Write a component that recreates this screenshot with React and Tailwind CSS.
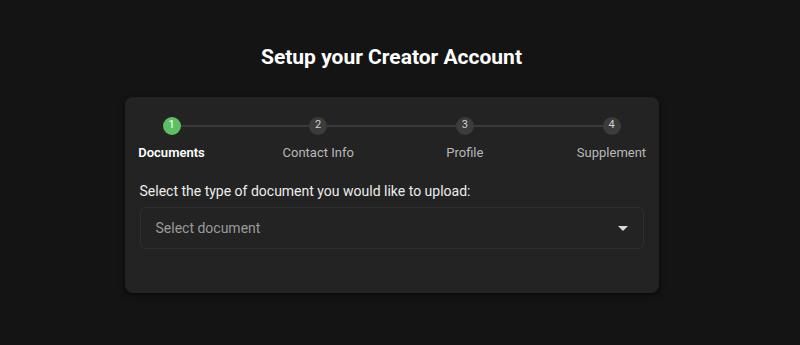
import React from 'react';

const steps = ['Documents', 'Contact Info', 'Profile', 'Supplement'];

const StepCircle = ({ n, active }) => (
  <div
    className={`flex h-[18px] w-[18px] shrink-0 items-center justify-center rounded-full text-[11px] ${
      active ? 'bg-[#5cbf62] text-white' : 'bg-[#3c3c3c] text-[#d0d0d0]'
    }`}
  >
    {n}
  </div>
);

const Stepper = ({ current }) => {
  return (
    <div>
      {/* circles + connectors */}
      <div className="flex items-center px-[23px]">
        {steps.map((s, i) => (
          <React.Fragment key={s}>
            <StepCircle n={i + 1} active={i === current} />
            {i < steps.length - 1 && <div className="h-[2px] flex-1 bg-[#3a3a3a]" />}
          </React.Fragment>
        ))}
      </div>
      {/* labels */}
      <div className="mt-[8px] flex justify-between">
        {steps.map((s, i) => (
          <div
            key={s}
            className={`flex w-16 justify-center whitespace-nowrap text-[13px] ${
              i === current ? 'font-semibold text-white' : 'text-[#b8b8b8]'
            }`}
          >
            {s}
          </div>
        ))}
      </div>
    </div>
  );
};

export default function App() {
  return (
    <div
      className="flex min-h-[345px] w-full flex-col items-center bg-[#141414] pr-[17px] pt-[42px]"
      style={{ fontFamily: 'Roboto, "Liberation Sans", sans-serif' }}
    >
      <h1 className="text-[21px] font-bold text-white">Setup your Creator Account</h1>

      <div className="mt-[23px] w-[534px] rounded-lg bg-[#232323] px-[15px] pb-[44px] pt-[20px] shadow-[0_2px_6px_rgba(0,0,0,0.6)]">
        <Stepper current={0} />

        <p className="mt-[19px] text-[14px] text-[#ececec]">
          Select the type of document you would like to upload:
        </p>

        <button className="mt-[5px] flex h-[42px] w-full items-center justify-between rounded-md border border-[#2f2f2f] bg-[#232323] pl-[15px] pr-[15px] text-left">
          <span className="text-[14px] text-[#9a9a9a]">Select document</span>
          <svg width="10" height="5" viewBox="0 0 10 5" className="text-[#d8d8d8]">
            <path d="M0 0h10L5 5z" fill="currentColor" />
          </svg>
        </button>
      </div>
    </div>
  );
}
